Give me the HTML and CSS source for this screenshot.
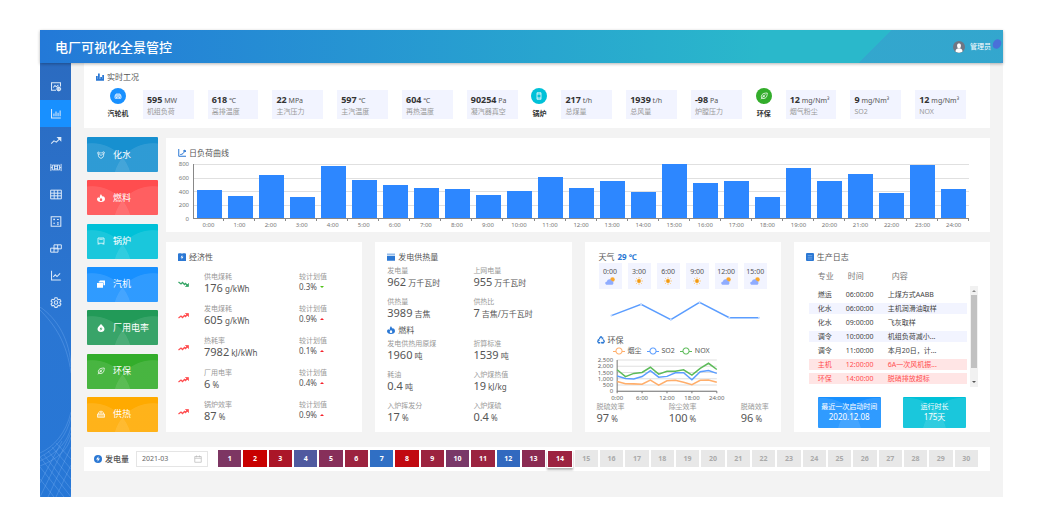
FILE: index.html
```html
<!DOCTYPE html>
<html lang="zh-CN">
<head>
    <meta charset="UTF-8">
    <meta name="viewport" content="width=device-width, initial-scale=1.0">
    <title>电厂可视化全景管控</title>
    <link rel="stylesheet" href="styles.css">
</head>
<body>
    <svg class="sprite" aria-hidden="true">
        <symbol id="i-monitor" viewBox="0 0 16 16"><path d="M8 13.5H1.5V2.5h13V8M4 9.500l2.500-3 2 2 3-3" /><circle cx="12" cy="11.500" r="2.500" /><path d="M12 8v7M8.500 11.500h7" /></symbol>
        <symbol id="i-bars" viewBox="0 0 16 16"><path d="M1.500 1.500v13h13.500M5 12V8M8 12V5M11 12V7M14 12V3.500" /></symbol>
        <symbol id="i-trend" viewBox="0 0 16 16"><path d="M1 12.500l4-4 3.500 2L14 5" /><path d="M10.500 3.500H15V8z" fill="currentColor" /></symbol>
        <symbol id="i-boiler" viewBox="0 0 20 16"><path d="M1.500 2v12M18.500 2v12M1.500 8H4M16 8h2.500M4 4h12v8H4zM7.500 4v8M12.500 4v8M7.500 6h5M7.500 10h5" /></symbol>
        <symbol id="i-table" viewBox="0 0 18 16"><path d="M1 1.500h16v13H1zM1 6h16M1 10h16M6.300 1.500v13M11.600 1.500v13" /></symbol>
        <symbol id="i-calc" viewBox="0 0 16 16"><path d="M1 1h14v14H1zM4 5h2.500M5.250 3.800v2.500M9.500 5H12M4 10.500h2.500M9.500 9.800H12M9.500 12H12" /></symbol>
        <symbol id="i-blocks" viewBox="0 0 18 16"><path d="M6 2.500h11v6H6zM1 7.500h11v6H1zM11.500 2.500v6M6 7.500v6" /></symbol>
        <symbol id="i-line" viewBox="0 0 16 16"><path d="M1.500 1v13.500H15M4 10l3-3 2.500 2.500L14 5" /></symbol>
        <symbol id="i-curve" viewBox="0 0 16 16"><path d="M1.500 0v14.500H16M4.500 11c5 0 7.500-3 9-8M10 4.500l4-2.500 1.500 4" stroke-width="2" /></symbol>
        <symbol id="i-gear" viewBox="0 0 16 16"><path d="M6.500 1h3l.6 2 1.600.9 2-.6 1.500 2.600-1.500 1.500v1.300l1.500 1.500-1.500 2.600-2-.6-1.600.9-.6 2h-3l-.6-2-1.600-.9-2 .6-1.500-2.600 1.500-1.500V7.300L.8 5.900l1.500-2.600 2 .6 1.600-.9z" /><circle cx="8" cy="8" r="2.500" /></symbol>
        <symbol id="i-city" viewBox="0 0 16 16"><path d="M0 6h3.500v8H0zM4 1h3.500v13H4zM8.500 8H12v6H8.500zM12.500 4H16v10h-3.500zM0 12h16v3.500H0z" fill="currentColor" stroke="none" /></symbol>
        <symbol id="i-turbine" viewBox="0 0 16 16"><path d="M2 12.500V8l2-4h8l2 4v4.500zM2 8h12M6 4v4M10 4v4M5 12.500V10h6v2.500" /></symbol>
        <symbol id="i-phone" viewBox="0 0 16 16"><path d="M4 1.500h8v13H4zM4 4h8M4 12h8" /></symbol>
        <symbol id="i-leaf" viewBox="0 0 16 16"><path d="M2 14.500C2 14 6 8.500 11 5M3.500 12.500C1 7 4 2 14.500 2c0 9-4 12.500-11 10.500zM6.500 9V6M6.500 9.500H10" /></symbol>
        <symbol id="i-water" viewBox="0 0 16 16"><circle cx="3" cy="4" r="1.800" /><circle cx="13" cy="3.500" r="1.800" /><path d="M2.500 6c0 5 2 8.500 5.500 8.500s5.500-3.500 5.500-9M5 6.500c2 3 4 3 6 0M8 2v3" /></symbol>
        <symbol id="i-fire" viewBox="0 0 16 16"><path d="M8 0c.5 3 3.500 4 4 6 1-.5 1-1.500 1-2 2 2 3 4 3 6 0 3.500-3 6-8 6s-8-2.500-8-5.500C0 8 2 6.500 3.500 6.500 4 7 4 8 5 8 5.500 5 6 3 8 0zm0 7.500c-1 2-2.500 2.500-2.500 4S6.500 14 8 14s2.500-1 2.500-2.500-1.500-2-2.500-4z" fill="currentColor" stroke="none" fill-rule="evenodd" /></symbol>
        <symbol id="i-frame" viewBox="0 0 16 16"><path d="M2 2h12v10.500H2zM1 14h4M11 14h4M4.500 4.500h7" /></symbol>
        <symbol id="i-cards" viewBox="0 0 16 16"><path d="M5.500 1H16v9.500h-3V5H5.500zM0 6h12v9.500H0zM3.500 2.500h2V5h-2z" fill="currentColor" stroke="none" /></symbol>
        <symbol id="i-drop" viewBox="0 0 16 16"><path d="M8 0c2 3 7 5 7 10 0 4-3 6-7 6s-7-2-7-6c0-5 5-7 7-10zm.5 6L5 10.500h2.500L7 13.500l4-4.500H8.500z" fill="currentColor" stroke="none" fill-rule="evenodd" /></symbol>
        <symbol id="i-heat" viewBox="0 0 16 16"><path d="M1 8h14v6.500H1zM4 8v6M8 8v6M12 8v6M3 8c0-4 2-5.500 5-5.500S13 4 13 8M6 5.500h4" /></symbol>
        <symbol id="i-box" viewBox="0 0 16 16"><path d="M0 1h3V0h2v1h6V0h2v1h3v15H0zm8.500 3L5 9h2.500L7 13l4-5.500H8.500z" fill="currentColor" stroke="none" fill-rule="evenodd" /></symbol>
        <symbol id="i-factory" viewBox="0 0 16 16"><path d="M0 6h16v9.500H0zM1 1h2v4H1zM5 1h2v4H5zM9 1h2v4H9zM13 1h2v4h-2z" fill="currentColor" stroke="none" /></symbol>
        <symbol id="i-recycle" viewBox="0 0 16 16"><path d="M4.500 6L7 2h2l2 3M12.500 7l2 3.500-1.500 3H9.500M6.500 13.500H3l-1.500-3 2-3" stroke-width="2.600" /><path d="M12.500 2.500v4H8.500zM10.500 10.500v5.500l-3-2.700zM.5 8l3.500-2.500L6 9.500z" fill="currentColor" stroke="none" /></symbol>
        <symbol id="i-log" viewBox="0 0 16 16"><path d="M2 0h12q2 0 2 2v12q0 2-2 2H2q-2 0-2-2V2q0-2 2-2z" fill="currentColor" stroke="none" /><path d="M3.500 5h9M3.500 8.500h9M3.500 12h9" stroke="#9cc2f2" stroke-width="1" /></symbol>
        <symbol id="i-power" viewBox="0 0 16 16"><circle cx="8" cy="8" r="8" fill="currentColor" stroke="none" /><path d="M9 2.500L4 9h3.500L7 13.500 12 7H8.500z" fill="#fff" stroke="none" /></symbol>
        <symbol id="i-up" viewBox="0 0 22 12"><path d="M1 10l5-4 3 3 4-4 2 2 4-4" stroke-width="2.500" /><path d="M15 1h6v6z" fill="currentColor" /></symbol>
        <symbol id="i-down" viewBox="0 0 22 12"><path d="M1 2l5 4 3-3 4 4 2-2 4 4" stroke-width="2.500" /><path d="M15 11h6V5z" fill="currentColor" /></symbol>
        <symbol id="i-sun" viewBox="0 0 16 16"><g stroke="#fbb03b" stroke-width="1.600"><circle cx="8" cy="8" r="3.800" fill="#f59a0c" stroke="none" /><path d="M8 .5v2.500M8 13v2.500M.5 8H3M13 8h2.500M2.700 2.700l1.800 1.800M11.500 11.500l1.800 1.800M2.700 13.300l1.800-1.800M11.500 4.500l1.800-1.800" /></g></symbol>
        <symbol id="i-cloud" viewBox="0 0 20 16"><circle cx="15" cy="5" r="4.500" fill="#f9a72b" stroke="none" /><path d="M4.500 15.500C-1 15.500-.5 9 4 9c.5-5 8-6 9.500-1 4.500 0 4.500 7.500 0 7.500z" fill="#8facff" stroke="none" /></symbol>
        <symbol id="i-calendar" viewBox="0 0 16 16"><path d="M1.500 3h13v11.500h-13zM1.500 6.500h13M5 1v3.500M11 1v3.500" /></symbol>
    </svg>

    <div class="app">
        <header class="header">
            <h1>电厂可视化全景管控</h1>
            <div class="user">
                <svg class="avatar" viewBox="0 0 24 24"><circle cx="12" cy="12" r="12" fill="#6f7683" /><path d="M5 21c0-5 3-6.500 7-6.500s7 1.500 7 6.500c-3 3-11 3-14 0z" fill="#fff" /><ellipse cx="12" cy="9.500" rx="4" ry="5" fill="#fff" /></svg>
                <span>管理员</span>
                <i class="blob"></i>
            </div>
        </header>

        <div class="body">
            <nav class="sidebar">
                <a href="#" aria-label="监控"><svg class="icon"><use href="#i-monitor" /></svg></a>
                <a href="#" aria-label="全景" class="active"><svg class="icon"><use href="#i-bars" /></svg></a>
                <a href="#" aria-label="趋势"><svg class="icon"><use href="#i-trend" /></svg></a>
                <a href="#" aria-label="设备"><svg class="icon"><use href="#i-boiler" /></svg></a>
                <a href="#" aria-label="报表"><svg class="icon"><use href="#i-table" /></svg></a>
                <a href="#" aria-label="计算"><svg class="icon"><use href="#i-calc" /></svg></a>
                <a href="#" aria-label="模块"><svg class="icon"><use href="#i-blocks" /></svg></a>
                <a href="#" aria-label="曲线"><svg class="icon"><use href="#i-line" /></svg></a>
                <a href="#" aria-label="设置"><svg class="icon"><use href="#i-gear" /></svg></a>
                <svg class="waves" viewBox="0 0 31 190" preserveAspectRatio="none" aria-hidden="true">
                    <path d="M0 0C18 12 30 34 31 60M0 3C15 18 27 36 31 66M0 150C16 142 27 128 31 110M0 154C18 146 28 134 31 120M0 159C18 152 28 142 31 130M0 146C14 140 26 126 31 105M0 150L31 190M0 160L24 190M0 172L14 190M4 148L31 182M8 144L31 172M12 140L31 162M16 136L31 152M0 190L31 126M8 190L31 140M16 190L31 158M0 176L22 134" />
                </svg>
            </nav>

            <main class="main">
                <section class="card realtime">
                    <h2><svg class="icon"><use href="#i-city" /></svg>实时工况</h2>
                    <div class="stats">
                        <div class="unit"><span class="round blue"><svg class="icon"><use href="#i-turbine" /></svg></span><b>汽轮机</b></div>
                        <div class="stat"><p><b>595</b> MW</p><small>机组负荷</small></div>
                        <div class="stat"><p><b>618</b> ℃</p><small>高排温度</small></div>
                        <div class="stat"><p><b>22</b> MPa</p><small>主汽压力</small></div>
                        <div class="stat"><p><b>597</b> ℃</p><small>主汽温度</small></div>
                        <div class="stat"><p><b>604</b> ℃</p><small>再热温度</small></div>
                        <div class="stat"><p><b>90254</b> Pa</p><small>凝汽器真空</small></div>
                        <div class="unit"><span class="round cyan"><svg class="icon"><use href="#i-phone" /></svg></span><b>锅炉</b></div>
                        <div class="stat"><p><b>217</b> t/h</p><small>总煤量</small></div>
                        <div class="stat"><p><b>1939</b> t/h</p><small>总风量</small></div>
                        <div class="stat"><p><b>-98</b> Pa</p><small>炉膛压力</small></div>
                        <div class="unit"><span class="round green"><svg class="icon"><use href="#i-leaf" /></svg></span><b>环保</b></div>
                        <div class="stat"><p><b>12</b> mg/Nm³</p><small>烟气粉尘</small></div>
                        <div class="stat"><p><b>9</b> mg/Nm³</p><small>SO2</small></div>
                        <div class="stat"><p><b>12</b> mg/Nm³</p><small>NOX</small></div>
                    </div>
                </section>

                <div class="middle">
                    <div class="tiles">
                        <button class="tile water"><svg class="icon"><use href="#i-water" /></svg>化水</button>
                        <button class="tile red"><svg class="icon"><use href="#i-fire" /></svg>燃料</button>
                        <button class="tile cyan"><svg class="icon"><use href="#i-frame" /></svg>锅炉</button>
                        <button class="tile blue"><svg class="icon"><use href="#i-cards" /></svg>汽机</button>
                        <button class="tile teal"><svg class="icon"><use href="#i-drop" /></svg>厂用电率</button>
                        <button class="tile green"><svg class="icon"><use href="#i-leaf" /></svg>环保</button>
                        <button class="tile orange"><svg class="icon"><use href="#i-heat" /></svg>供热</button>
                    </div>

                    <div class="panels">
                        <section class="card load">
                            <h2><svg class="icon"><use href="#i-curve" /></svg>日负荷曲线</h2>
                            <div class="chart">
                                <div class="y-axis"><span>800</span><span>600</span><span>400</span><span>200</span><span>0</span></div>
                                <div class="plot" id="load-plot"></div>
                                <div class="x-axis" id="load-axis"></div>
                            </div>
                        </section>

                        <div class="columns">
                            <section class="card economy">
                                <h2><svg class="icon"><use href="#i-box" /></svg>经济性</h2>
                                <div class="row"><svg class="icon trend down"><use href="#i-down" /></svg><div class="metric"><small>供电煤耗</small><p><b>176</b> g/kWh</p></div><div class="plan"><small>较计划值</small><p>0.3% <i class="arrow down"></i></p></div></div>
                                <div class="row"><svg class="icon trend"><use href="#i-up" /></svg><div class="metric"><small>发电煤耗</small><p><b>605</b> g/kWh</p></div><div class="plan"><small>较计划值</small><p>0.9% <i class="arrow"></i></p></div></div>
                                <div class="row"><svg class="icon trend"><use href="#i-up" /></svg><div class="metric"><small>热耗率</small><p><b>7982</b> kJ/kWh</p></div><div class="plan"><small>较计划值</small><p>0.1% <i class="arrow"></i></p></div></div>
                                <div class="row"><svg class="icon trend"><use href="#i-up" /></svg><div class="metric"><small>厂用电率</small><p><b>6</b> %</p></div><div class="plan"><small>较计划值</small><p>0.4% <i class="arrow"></i></p></div></div>
                                <div class="row"><svg class="icon trend"><use href="#i-up" /></svg><div class="metric"><small>锅炉效率</small><p><b>87</b> %</p></div><div class="plan"><small>较计划值</small><p>0.9% <i class="arrow"></i></p></div></div>
                            </section>

                            <section class="card power">
                                <h2><svg class="icon"><use href="#i-factory" /></svg>发电供热量</h2>
                                <div class="pairs">
                                    <div class="metric"><small>发电量</small><p><b>962</b> 万千瓦时</p></div>
                                    <div class="metric"><small>上网电量</small><p><b>955</b> 万千瓦时</p></div>
                                    <div class="metric"><small>供热量</small><p><b>3989</b> 吉焦</p></div>
                                    <div class="metric"><small>供热比</small><p><b>7</b> 吉焦/万千瓦时</p></div>
                                </div>
                                <h2><svg class="icon"><use href="#i-fire" /></svg>燃料</h2>
                                <div class="pairs">
                                    <div class="metric"><small>发电供热用原煤</small><p><b>1960</b> 吨</p></div>
                                    <div class="metric"><small>折算标准</small><p><b>1539</b> 吨</p></div>
                                    <div class="metric"><small>耗油</small><p><b>0.4</b> 吨</p></div>
                                    <div class="metric"><small>入炉煤热值</small><p><b>19</b> kJ/kg</p></div>
                                    <div class="metric"><small>入炉挥发分</small><p><b>17</b> %</p></div>
                                    <div class="metric"><small>入炉煤硫</small><p><b>0.4</b> %</p></div>
                                </div>
                            </section>

                            <section class="card weather">
                                <h2>天气 <b>29 ℃</b></h2>
                                <div class="hours">
                                    <div>0:00<svg class="icon"><use href="#i-cloud" /></svg></div>
                                    <div>3:00<svg class="icon"><use href="#i-sun" /></svg></div>
                                    <div>6:00<svg class="icon"><use href="#i-sun" /></svg></div>
                                    <div>9:00<svg class="icon"><use href="#i-sun" /></svg></div>
                                    <div>12:00<svg class="icon"><use href="#i-cloud" /></svg></div>
                                    <div>15:00<svg class="icon"><use href="#i-cloud" /></svg></div>
                                </div>
                                <svg class="temperature" viewBox="0 0 168 40">
                                    <path d="M14 24L43 13L72 28L100 11L129 26L158 26" fill="none" stroke="#5b9dff" stroke-width="1.500" />
                                    <g fill="#c5dcff"><circle cx="14" cy="24" r="1" /><circle cx="43" cy="13" r="1" /><circle cx="72" cy="28" r="1" /><circle cx="100" cy="11" r="1" /><circle cx="129" cy="26" r="1" /><circle cx="158" cy="26" r="1" /></g>
                                </svg>
                                <h2><svg class="icon"><use href="#i-recycle" /></svg>环保</h2>
                                <div class="legend"><span class="dust">烟尘</span><span class="so2">SO2</span><span class="nox">NOX</span></div>
                                <svg class="emission" viewBox="0 0 130 46" id="emission"></svg>
                                <div class="rates">
                                    <div class="metric"><small>脱硫效率</small><p><b>97</b> %</p></div>
                                    <div class="metric"><small>除尘效率</small><p><b>100</b> %</p></div>
                                    <div class="metric"><small>脱硝效率</small><p><b>96</b> %</p></div>
                                </div>
                            </section>

                            <section class="card log">
                                <h2><svg class="icon"><use href="#i-log" /></svg>生产日志</h2>
                                <div class="log-list">
                                    <table>
                                        <thead>
                                            <tr><th>专业</th><th>时间</th><th>内容</th></tr>
                                        </thead>
                                        <tbody>
                                            <tr><td>燃运</td><td>06:00:00</td><td>上煤方式AABB</td></tr>
                                            <tr class="even"><td>化水</td><td>06:00:00</td><td>主机润滑油取样</td></tr>
                                            <tr><td>化水</td><td>09:00:00</td><td>飞灰取样</td></tr>
                                            <tr class="even"><td>调令</td><td>10:00:00</td><td>机组负荷减小...</td></tr>
                                            <tr><td>调令</td><td>11:00:00</td><td>本月20日，计...</td></tr>
                                            <tr class="alarm"><td>主机</td><td>12:00:00</td><td>6A一次风机振...</td></tr>
                                            <tr class="alarm"><td>环保</td><td>14:00:00</td><td>脱硝排放超标</td></tr>
                                        </tbody>
                                    </table>
                                    <div class="scrollbar"><i class="arrow"></i><span></span><i class="arrow down"></i></div>
                                </div>
                                <div class="runs">
                                    <div class="run blue"><small>最近一次启动时间</small>2020.12.08</div>
                                    <div class="run cyan"><small>运行时长</small>175天</div>
                                </div>
                            </section>
                        </div>
                    </div>
                </div>

                <section class="card output">
                    <label for="month"><svg class="icon"><use href="#i-power" /></svg>发电量</label>
                    <div class="picker"><input type="text" id="month" value="2021-03"><svg class="icon"><use href="#i-calendar" /></svg></div>
                    <div class="days" id="days"></div>
                </section>
            </main>
        </div>
    </div>

    <script>
        // Daily load bars
        const load = [412, 320, 630, 305, 770, 558, 495, 450, 436, 340, 398, 605, 440, 553, 385, 795, 524, 548, 305, 737, 548, 655, 378, 785, 425];
        const plot = document.getElementById("load-plot");
        const axis = document.getElementById("load-axis");

        load.forEach(function (value, hour) {
            plot.innerHTML += `<div class="slot"><div class="bar" style="height: ${value / 8}%"></div></div>`;
            axis.innerHTML += `<span>${hour}:00</span>`;
        });

        // Emission lines, one point every two hours
        const emissions = [
            { color: "#ffae6b", data: [780, 600, 590, 560, 900, 480, 840, 880, 720, 520, 880, 900, 720] },
            { color: "#5b9dff", data: [1220, 1030, 980, 1180, 1650, 1130, 1190, 1480, 1480, 920, 1560, 1660, 1430] },
            { color: "#5dbb5a", data: [1720, 1170, 1430, 1500, 1920, 1370, 1600, 1600, 1720, 1290, 1830, 2240, 1740] }
        ];
        const left = 20, right = 119, base = 35, height = 31;
        let chart = "";

        for (let i = 0; i <= 5; i++) {
            const y = base - i * height / 5;
            const text = ["0", "500", "1,000", "1,500", "2,000", "2,500"][i];
            chart += `<path class="grid" d="M${left} ${y}H${right}" /><text x="${left - 4}" y="${y + 2}" text-anchor="end">${text}</text>`;
        }
        chart += `<path class="axis" d="M${left} ${base - height}V${base}H${right}" />`;
        for (let i = 0; i <= 4; i++) {
            const x = left + i * (right - left) / 4;
            chart += `<path class="axis" d="M${x} ${base}v2" /><text x="${x}" y="${base + 9}" text-anchor="middle">${i * 6}:00</text>`;
        }
        emissions.forEach(function (line) {
            const points = line.data.map(function (value, i) {
                return [left + i * (right - left) / 12, base - value / 2500 * height];
            });
            chart += `<polyline points="${points.join(" ")}" fill="none" stroke="${line.color}" stroke-width="1.500" />`;
        });
        document.getElementById("emission").innerHTML = chart;

        // Days of the month
        const dayColors = ["#7d3663", "#c80000", "#ab1628", "#505a9f", "#872f5a", "#9c233f", "#306fc4", "#c10910", "#9c233f", "#793868", "#9b2340", "#3269bf", "#8b2b52", "#9c2340"];
        const days = document.getElementById("days");

        for (let day = 1; day <= 30; day++) {
            const color = dayColors[day - 1];
            const style = color ? ` style="background-color: ${color}"` : " disabled";
            days.innerHTML += `<button${day === 14 ? ' class="today"' : ""}${style}>${day}</button>`;
        }
    </script>
</body>
</html>
```

FILE: styles.css
```css
* {
    box-sizing: border-box;
}

body {
    font-family: "Noto Sans", "Noto Sans CJK SC", sans-serif;
    font-size: 8px;
    line-height: 10px;
    color: #555;
    background-color: #fff;
    margin: 0;
    padding: 30px 40px;
}

h1, h2, p {
    margin: 0;
    font-weight: normal;
}

button, input {
    font: inherit;
    border: none;
    padding: 0;
    margin: 0;
}

small {
    display: block;
    font-size: 7px;
    color: #999;
}

.sprite {
    display: none;
}

.icon {
    width: 8px;
    height: 8px;
    fill: none;
    stroke: currentColor;
    stroke-width: 1.5;
    flex: none;
}

.header {
    position: relative;
    z-index: 1;
    display: flex;
    align-items: center;
    justify-content: space-between;
    height: 33px;
    padding: 0 12px 0 15px;
    color: #fff;
    background: linear-gradient(135deg, transparent 0 98%, rgba(80, 120, 210, 0.3) 98%) right / 160px 100% no-repeat,
        linear-gradient(135deg, transparent 0 24px, rgba(65, 140, 210, 0.4) 24px) right / 145px 100% no-repeat,
        linear-gradient(90deg, #2379d8, #2ab8cb 75%, #2ab8cb);
    box-shadow: 0 1px 3px rgba(0, 0, 0, 0.3);
}

.header h1 {
    font-size: 13px;
    line-height: 16px;
    font-weight: 500;
}

.user {
    position: relative;
    display: flex;
    align-items: center;
    gap: 5px;
    font-size: 7px;
}

.avatar {
    width: 12px;
    height: 12px;
}

.blob {
    position: absolute;
    right: -10px;
    top: -2px;
    width: 8px;
    height: 10px;
    border-radius: 50%;
    background-color: #4a70d9;
    transform: rotate(30deg);
}

.body {
    display: flex;
    background-color: #f3f3f3;
}

.sidebar {
    position: relative;
    width: 31px;
    padding-top: 10px;
    background: linear-gradient(#2b6bc0, #2a76d3 60%, #2777d6);
}

.sidebar a {
    display: flex;
    align-items: center;
    justify-content: center;
    height: 27px;
    color: #dce9f8;
}

.sidebar a.active {
    background-color: #1890ff;
}

.sidebar .icon {
    width: 12px;
    height: 11px;
}

.waves {
    position: absolute;
    left: 0;
    bottom: 0;
    width: 100%;
    height: 190px;
    fill: none;
    stroke: rgba(150, 200, 255, 0.25);
    stroke-width: 1;
    pointer-events: none;
}

.main {
    flex: 1;
    min-width: 0;
    padding: 0 13px 26px;
}

.card {
    background-color: #fff;
}

.card h2 {
    display: flex;
    align-items: center;
    gap: 3px;
    font-size: 8px;
    line-height: 10px;
}

.card h2 .icon {
    color: #2b78d4;
}

.card h2 b {
    color: #2b78d4;
}

.realtime {
    padding: 9px 17px 9px 12px;
}

.stats {
    display: grid;
    grid-template-columns: 36fr repeat(6, 65fr) 30fr repeat(3, 65fr) 30fr repeat(3, 65fr);
    margin: 6px 0 0 4px;
}

.stat {
    height: 29px;
    margin: 2px 7px 0;
    padding: 5px 4px;
    font-size: 7px;
    white-space: nowrap;
    background-color: #f2f4ff;
}

.stat b {
    font-size: 9px;
    color: #333;
}

.stat small {
    line-height: 12px;
}

.unit {
    display: flex;
    flex-direction: column;
    align-items: center;
    gap: 5px;
    font-size: 7px;
    white-space: nowrap;
    color: #333;
}

.round {
    display: flex;
    align-items: center;
    justify-content: center;
    width: 16px;
    height: 16px;
    border-radius: 50%;
    color: #fff;
}

.blue {
    background-color: #1890ff;
}

.cyan {
    background-color: #00c1d8;
}

.green {
    background-color: #33ad2b;
}

.water {
    background-color: #1790d0;
}

.red {
    background-color: #ff4d4f;
}

.teal {
    background-color: #229a58;
}

.orange {
    background-color: #ffaa00;
}

.middle {
    display: flex;
    gap: 8px;
    margin: 9px 0 15px 3px;
}

.tiles {
    display: flex;
    flex-direction: column;
    justify-content: space-between;
    width: 71px;
    gap: 8px;
}

.tile {
    display: flex;
    align-items: center;
    gap: 8px;
    height: 35px;
    padding-left: 10px;
    font-size: 9px;
    border-radius: 1px;
    color: #fff;
}

.tile, .run {
    background-image: radial-gradient(circle 40px at 7% 131%, rgba(255, 255, 255, 0.1) 98%, transparent),
        radial-gradient(circle 40px at 93% 131%, rgba(255, 255, 255, 0.1) 98%, transparent);
}

.panels {
    flex: 1;
    min-width: 0;
    padding-top: 1px;
}

.load {
    padding: 10px 21px 1px 12px;
}

.chart {
    display: grid;
    grid-template-columns: 15px 1fr;
    grid-template-rows: 55px 12px;
    margin-top: 6px;
    font-size: 6px;
    color: #777;
}

.y-axis {
    display: flex;
    flex-direction: column;
    justify-content: space-between;
    margin: -5px 4px -5px 0;
    text-align: right;
}

.plot {
    display: flex;
    border-left: 1px solid #888;
    border-bottom: 1px solid #888;
    background: repeating-linear-gradient(#e0e0e0 0 1px, transparent 1px 25%);
}

.slot {
    flex: 1;
    display: flex;
    align-items: flex-end;
    padding: 0 3px;
}

.bar {
    width: 100%;
    background-color: #2d87ff;
}

.x-axis {
    grid-column: 2;
    display: flex;
}

.x-axis span {
    flex: 1;
    padding-top: 1px;
    text-align: center;
    background: linear-gradient(#888, #888) right top / 1px 2px no-repeat;
}

.columns {
    display: grid;
    grid-template-columns: repeat(4, 1fr);
    gap: 13px;
    margin-top: 10px;
}

.columns .card {
    height: 190px;
    padding: 10px 12px 0;
}

.metric, .plan {
    white-space: nowrap;
}

.metric b {
    font-size: 11px;
    font-weight: normal;
}

.metric p {
    line-height: 12px;
}

.row {
    display: grid;
    grid-template-columns: 26px 95px 1fr;
    height: 22px;
    margin-bottom: 10px;
}

.economy h2 {
    margin-bottom: 10px;
}

.trend {
    width: 11px;
    height: 6px;
    margin-top: 9px;
    color: #ff4d4f;
}

.trend.down {
    color: #36a566;
}

.arrow {
    display: inline-block;
    margin: 0 0 2px 1px;
    border: 2px solid transparent;
    border-top: none;
    border-bottom-color: #f5222d;
}

.arrow.down {
    border-top: 2px solid #52c41a;
    border-bottom: none;
}

.pairs {
    display: grid;
    grid-template-columns: 1fr 1fr;
    gap: 8px 0;
    margin: 4px 0 5px;
}

.weather h2 {
    padding-left: 2px;
}

.hours {
    display: flex;
    justify-content: space-between;
    margin: 1px 2px 0;
}

.hours div {
    display: flex;
    flex-direction: column;
    align-items: center;
    width: 23px;
    height: 26px;
    padding-top: 4px;
    font-size: 7px;
    background-color: #f2f4ff;
}

.hours .icon {
    width: 10px;
}

.temperature {
    display: block;
    width: 100%;
    margin: 2px 0 3px;
}

.weather .temperature + h2 {
    padding-left: 0;
}

.legend {
    display: flex;
    gap: 5px;
    margin: 1px 0 0 16px;
    font-size: 7px;
}

.legend span {
    display: flex;
    align-items: center;
    gap: 3px;
}

.legend span::before {
    content: "";
    width: 12px;
    height: 8px;
    background: radial-gradient(circle, #fff 2px, currentColor 3px, transparent 4px),
        linear-gradient(currentColor, currentColor) center / 100% 1px no-repeat;
}

.legend .dust::before {
    color: #ffae6b;
}

.legend .so2::before {
    color: #5b9dff;
}

.legend .nox::before {
    color: #5dbb5a;
}

.emission {
    display: block;
    width: 76%;
}

.emission text {
    font-size: 6px;
    fill: #666;
}

.grid {
    stroke: #e0e0e0;
}

.axis {
    fill: none;
    stroke: #777;
}

.rates {
    display: flex;
    justify-content: space-between;
}

.log-list {
    display: flex;
    gap: 3px;
    align-items: flex-end;
    margin: 6px 0 10px 3px;
}

.log table {
    flex: 1;
    table-layout: fixed;
    border-spacing: 0 3px;
    font-size: 7px;
    color: #444;
}

.log th {
    padding: 0 0 5px 4px;
    font-size: 8px;
    line-height: 10px;
    font-weight: normal;
    text-align: left;
    color: #777;
}

.log td {
    padding: 0;
    line-height: 11px;
    white-space: nowrap;
}

.log th:first-child {
    width: 37px;
}

.log th:nth-child(2) {
    width: 42px;
    padding-left: 2px;
}

.log th:first-child, .log td:first-child {
    padding-left: 9px;
}

.even {
    background-color: #f2f4ff;
}

.alarm {
    color: #ff4d4f;
    background-color: #ffe5e5;
}

.scrollbar {
    display: flex;
    flex-direction: column;
    align-items: center;
    width: 8px;
    height: 101px;
    padding: 4px 0;
    background-color: #f1f1f1;
}

.scrollbar span {
    width: 6px;
    height: 73px;
    margin: 3px 0 auto;
    background-color: #c1c1c1;
}

.scrollbar .arrow {
    margin: 0;
    border-bottom-color: #888;
}

.scrollbar .arrow.down {
    border-top-color: #555;
}

.runs {
    display: flex;
    justify-content: space-between;
    margin: 0 12px;
}

.run {
    width: 63px;
    height: 31px;
    padding-top: 4px;
    text-align: center;
    color: #fff;
    border-radius: 1px;
}

.run small {
    color: #fff;
    line-height: 11px;
}

.output {
    display: flex;
    align-items: center;
    height: 24px;
    padding: 0 12px 0 10px;
}

.output label {
    display: flex;
    align-items: center;
    gap: 3px;
    font-weight: 500;
}

.output label .icon {
    color: #2b78d4;
}

.picker {
    display: flex;
    align-items: center;
    width: 72px;
    height: 16px;
    margin: 0 10px 0 7px;
    padding: 0 5px;
    border: 1px solid #e5e5e5;
    color: #bbb;
}

.picker input {
    flex: 1;
    min-width: 0;
    font-size: 7px;
    color: #666;
    background: none;
}

.days {
    flex: 1;
    display: flex;
    gap: 2px;
}

.days button {
    flex: 1;
    height: 17px;
    font-size: 7px;
    font-weight: bold;
    color: #fff;
}

.days button:disabled {
    color: #aaa;
    background-color: #e8e8e8;
}

.days .today {
    height: 18px;
    border: 1px solid #fff;
    box-shadow: 0 2px 2px rgba(0, 0, 0, 0.3);
}
```
